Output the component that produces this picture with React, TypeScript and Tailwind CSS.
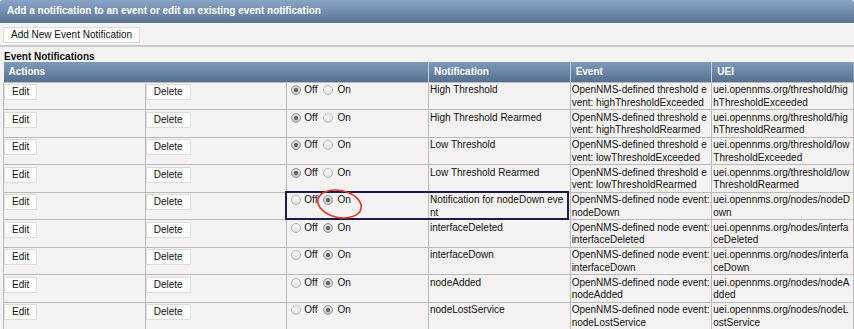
import React from "react";

type Row = {
  name: string;
  event: string;
  uei: string;
  on: boolean;
};

const rows: Row[] = [
  {
    name: "High Threshold",
    event: "OpenNMS-defined threshold event: highThresholdExceeded",
    uei: "uei.opennms.org/threshold/highThresholdExceeded",
    on: false,
  },
  {
    name: "High Threshold Rearmed",
    event: "OpenNMS-defined threshold event: highThresholdRearmed",
    uei: "uei.opennms.org/threshold/highThresholdRearmed",
    on: false,
  },
  {
    name: "Low Threshold",
    event: "OpenNMS-defined threshold event: lowThresholdExceeded",
    uei: "uei.opennms.org/threshold/lowThresholdExceeded",
    on: false,
  },
  {
    name: "Low Threshold Rearmed",
    event: "OpenNMS-defined threshold event: lowThresholdRearmed",
    uei: "uei.opennms.org/threshold/lowThresholdRearmed",
    on: false,
  },
  {
    name: "Notification for nodeDown event",
    event: "OpenNMS-defined node event: nodeDown",
    uei: "uei.opennms.org/nodes/nodeDown",
    on: true,
  },
  {
    name: "interfaceDeleted",
    event: "OpenNMS-defined node event: interfaceDeleted",
    uei: "uei.opennms.org/nodes/interfaceDeleted",
    on: true,
  },
  {
    name: "interfaceDown",
    event: "OpenNMS-defined node event: interfaceDown",
    uei: "uei.opennms.org/nodes/interfaceDown",
    on: true,
  },
  {
    name: "nodeAdded",
    event: "OpenNMS-defined node event: nodeAdded",
    uei: "uei.opennms.org/nodes/nodeAdded",
    on: true,
  },
  {
    name: "nodeLostService",
    event: "OpenNMS-defined node event: nodeLostService",
    uei: "uei.opennms.org/nodes/nodeLostService",
    on: true,
  },
];

function Radio({ checked }: { checked: boolean }) {
  return (
    <span
      className={`flex items-center justify-center w-[10px] h-[10px] rounded-full border ${
        checked
          ? "border-[#9a9a9a] bg-gradient-to-b from-[#dcdcdc] to-[#c4c4c4]"
          : "border-[#b4b4b4] bg-gradient-to-b from-[#fbfbfb] to-[#e2e2e2]"
      }`}
    >
      {checked && <span className="w-[4px] h-[4px] rounded-full bg-[#5a5a5a]" />}
    </span>
  );
}

function SmallButton({ label }: { label: string }) {
  return (
    <button className="h-[16px] px-[7px] bg-white border border-[#dcdcdc] text-[10px] leading-[14px] text-[#111]">
      {label}
    </button>
  );
}

const cell = "align-top border border-[#bababa] px-[1px] pt-[1.5px] break-all";

export default function App() {
  return (
    <div className="relative w-[854px] h-[329px] overflow-hidden bg-[#f4f2f2] font-['Liberation_Sans',Arial,sans-serif] text-[10px] leading-[12.5px] text-[#111]">
      <div className="h-[23px] flex items-center px-[7px] rounded-t-[3px] bg-gradient-to-b from-[#89a4c5] to-[#5a7594] text-white font-bold text-[10px]">
        Add a notification to an event or edit an existing event notification
      </div>
      <div className="h-[24px] pl-[3px] pt-[4px] border-b-2 border-[#cacaca]">
        <SmallButton label="Add New Event Notification" />
      </div>
      <div className="pl-[4px] pt-[4px] h-[15px] font-bold text-[10px] leading-[11px]">
        Event Notifications
      </div>

      <table className="ml-[3px] w-[851px] table-fixed border-collapse">
        <thead>
          <tr className="h-[20px] bg-gradient-to-b from-[#7e9abb] to-[#56718f] text-white font-bold text-left">
            <th colSpan={3} className="px-[5px] font-bold">
              Actions
            </th>
            <th className="px-[5px] font-bold border-l border-[#c5cfdb]">Notification</th>
            <th className="px-[5px] font-bold border-l border-[#c5cfdb]">Event</th>
            <th className="px-[5px] font-bold border-l border-[#c5cfdb]">UEI</th>
          </tr>
        </thead>
        <tbody>
          {rows.map((r) => (
            <tr key={r.name} className="h-[27.33px]">
              <td className={`${cell} pl-0`}>
                <SmallButton label="Edit" />
              </td>
              <td className={`${cell} pl-0`}>
                <SmallButton label="Delete" />
              </td>
              <td className={cell}>
                <div className="flex items-center h-[12.5px] pl-[3px]">
                  <Radio checked={!r.on} />
                  <span className="ml-[3px]">Off</span>
                  <span className="ml-[6px]">
                    <Radio checked={r.on} />
                  </span>
                  <span className="ml-[4px]">On</span>
                </div>
              </td>
              <td className={cell}>{r.name}</td>
              <td className={cell}>{r.event}</td>
              <td className={cell}>{r.uei}</td>
            </tr>
          ))}
        </tbody>
      </table>

      {/* highlight on the nodeDown row */}
      <div className="absolute left-[285px] top-[191px] w-[284px] h-[29px] border-2 border-[#1d1d4d] pointer-events-none" />
      <svg
        className="absolute left-[312px] top-[185px] pointer-events-none"
        width="56"
        height="40"
        viewBox="0 0 56 40"
      >
        <ellipse
          cx="27.5"
          cy="19"
          rx="22"
          ry="13.5"
          transform="rotate(12 27.5 19)"
          fill="none"
          stroke="#e2372c"
          strokeWidth="1.6"
        />
      </svg>
    </div>
  );
}
